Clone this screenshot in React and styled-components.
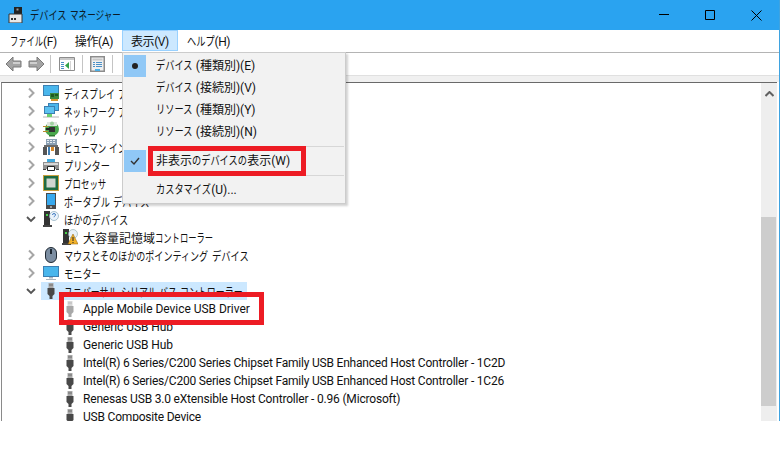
import React from "react";
import styled, { createGlobalStyle } from "styled-components";

const Global = createGlobalStyle`
  html, body { margin: 0; padding: 0; background: #fff; }
  body { font-family: Roboto, "Noto Sans CJK JP", sans-serif; font-size: 12px; color: #111; }
`;

const Page = styled.div`
  position: relative;
  width: 780px;
  height: 467px;
  overflow: hidden;
  background: #fff;
`;
const Win = styled.div`
  display: flex;
  flex-direction: column;
  height: 421px;
  border-right: 1px solid #3fa3e0;
  box-sizing: border-box;
`;
const TitleBar = styled.div`
  display: flex;
  align-items: center;
  height: 30px;
  flex: none;
  background: #2aa3f0;
  padding-left: 8px;
  color: #0a1a26;
`;
const TitleText = styled.span`
  margin: -1px 0 0 7px;
  flex: 1;
`;
const WinButton = styled.span`
  width: 46px;
  height: 30px;
  display: flex;
  align-items: center;
  justify-content: center;
`;
const MenuBar = styled.div`
  display: flex;
  height: 23px;
  flex: none;
  padding-left: 1px;
  box-sizing: border-box;
  border-bottom: 1px solid #b4b4b4;
  background: #fff;
`;
const MenuTop = styled.div`
  height: 21px;
  padding: 2px 9px 0;
  box-sizing: border-box;
  line-height: 20px;
  white-space: nowrap;
  letter-spacing: -0.4px;
  background: ${(p) => (p.$on ? "#cce8ff" : "transparent")};
  outline: ${(p) => (p.$on ? "1px solid #99d1ff" : "none")};
  outline-offset: -1px;
`;
const Toolbar = styled.div`
  display: flex;
  align-items: center;
  height: 22px;
  flex: none;
  padding-left: 5px;
  background: #fff;
`;
const ToolGap = styled.span`
  width: 6px;
`;
const ToolSep = styled.span`
  width: 1px;
  height: 18px;
  background: #c4c4c4;
  margin: 0 ${(p) => p.$r}px 0 ${(p) => p.$l}px;
`;
const Band = styled.div`
  height: 7px;
  flex: none;
  background: #f0f0f0;
  border-top: 1px solid #e0e0e0;
  box-sizing: border-box;
`;
const Body = styled.div`
  flex: 1;
  min-height: 0;
  display: flex;
  margin: 0 2px 0 1px;
  border-top: 1px solid #696969;
  border-left: 1px solid #8a8a8a;
`;
const TreePane = styled.div`
  flex: 1;
  min-width: 0;
  overflow: hidden;
  background: #fff;
  padding-top: 1px;
`;
const Row = styled.div`
  display: flex;
  align-items: center;
  height: 18px;
  padding-left: ${(p) => p.$indent}px;
  white-space: nowrap;
`;
const Twisty = styled.span`
  width: 12px;
  height: 18px;
  margin-right: 4px;
  display: flex;
  align-items: center;
  justify-content: center;
  flex: none;
`;
const RowBody = styled.span`
  display: flex;
  align-items: center;
  height: 18px;
  background: ${(p) => (p.$sel ? "#cce8ff" : "transparent")};
  padding-right: ${(p) => (p.$sel ? "4px" : "0")};
`;
const IconBox = styled.span`
  width: 16px;
  height: 16px;
  margin: 0 5px 0 2px;
  flex: none;
  display: flex;
`;
const Label = styled.span`
  letter-spacing: ${(p) => p.$track || 0}px;
`;
const Scrollbar = styled.div`
  width: 16px;
  flex: none;
  display: flex;
  flex-direction: column;
  background: #eeeeee;
`;
const ScrollArrow = styled.div`
  height: 21px;
  display: flex;
  align-items: center;
  justify-content: center;
`;
const ScrollGap = styled.div`
  height: 113px;
`;
const Thumb = styled.div`
  height: 189px;
  width: 15px;
  background: #cdcdcd;
`;
const DropMenu = styled.div`
  position: absolute;
  left: 122px;
  top: 52px;
  width: 224px;
  height: 152px;
  box-sizing: border-box;
  background: #f2f2f2;
  border: 1px solid #cccccc;
  box-shadow: 2px 2px 2px rgba(0, 0, 0, 0.18);
  padding: 2px 1px;
`;
const DropItem = styled.div`
  display: flex;
  align-items: center;
  height: 22px;
`;
const Gutter = styled.span`
  width: 22px;
  height: 22px;
  flex: none;
  display: flex;
  align-items: center;
  justify-content: center;
  background: ${(p) => (p.$on ? "#90c8f6" : "transparent")};
`;
const DropText = styled.span`
  margin: -3px 0 0 10px;
`;
const DropSep = styled.div`
  height: 1px;
  background: #d7d7d7;
  margin: 3px 0 3px 25px;
`;
const RedBox = styled.div`
  position: absolute;
  left: ${(p) => p.$x}px;
  top: ${(p) => p.$y}px;
  width: ${(p) => p.$w}px;
  height: ${(p) => p.$h}px;
  box-sizing: border-box;
  border: 5px solid #ed1c24;
`;
const Kana = styled.span`
  display: inline-block;
  white-space: nowrap;
  letter-spacing: 0;
  transform-origin: left center;
`;

/* Meiryo UI sets kana much narrower than a full em: squeeze each kana run to the width it takes there. */
const kanaStyle = (run, w) => {
  const small = (run.match(/[ァィゥェォッャュョぁぃぅぇぉっゃゅょ]/g) || []).length;
  const width = (run.length - small) * w + small * 5.5;
  return { width, transform: `scaleX(${width / (run.length * 12)})` };
};

const Jp = ({ children, w = 9.2 }) => (
  <>
    {children.split(/([ァ-ヶーぁ-ん]+)/).map((part, i) =>
      i % 2 ? (
        <Kana key={i} style={kanaStyle(part, w)}>
          {part}
        </Kana>
      ) : (
        part
      )
    )}
  </>
);

const Chevron = ({ open }) => (
  <svg width="10" height="12" viewBox="0 0 10 12">
    {open ? (
      <path d="M1 4l4 4 4-4" fill="none" stroke="#555" strokeWidth="1.8" />
    ) : (
      <path d="M3 1.5l4.5 4.5L3 10.5" fill="none" stroke="#a6a6a6" strokeWidth="2" />
    )}
  </svg>
);

const Usb = ({ light }) => (
  <svg width="16" height="16" viewBox="0 0 16 16">
    <path d="M5.5 0h5v5h-5z" fill={light ? "#d8d8d8" : "#a8a8a8"} />
    <path d="M6.5 1.5h1v1h-1zM8.5 1.5h1v1h-1z" fill={light ? "#999" : "#333"} />
    <path d="M4.5 5h7v6l-2 2v3h-3v-3l-2-2z" fill={light ? "#a8a8a8" : "#484848"} />
  </svg>
);
const AppIcon = () => (
  <svg width="15" height="16" viewBox="0 0 15 16">
    <path d="M6 0h8v8H6z" fill="#222" />
    <path d="M8.5 1.5h2v2h-2z" fill="#9a9a9a" />
    <path d="M1 7h13v9H1z" fill="#e8e8e8" stroke="#333" strokeWidth="1" />
    <path d="M3 11h2v2H3zM6 11h2v2H6z" fill="#333" />
  </svg>
);
const Monitor = () => (
  <svg width="16" height="16" viewBox="0 0 16 16">
    <path d="M0 1h16v11H0z" fill="#3c7fb1" />
    <path d="M1 2h14v9H1z" fill="#49b6ec" />
    <path d="M6 12h4v1.5H6zM3 14h10v1H3z" fill="#a9b4bd" />
  </svg>
);
const DisplayIcon = () => (
  <svg width="16" height="16" viewBox="0 0 16 16">
    <path d="M0 0h16v11H0z" fill="#3c7fb1" />
    <path d="M1 1h14v9H1z" fill="#49b6ec" />
    <path d="M7 8h9v6H7z" fill="#3b8a3e" />
    <path d="M8 9h3v3H8zM12 9h3v2h-3z" fill="#1e5a22" />
    <path d="M8 14h7v2H8z" fill="#d6982e" />
  </svg>
);
const NetworkIcon = () => (
  <svg width="16" height="16" viewBox="0 0 16 16">
    <path d="M5 0h11v8H5z" fill="#3c7fb1" />
    <path d="M6 1h9v6H6z" fill="#49b6ec" />
    <path d="M1 3h11v8H1z" fill="#3c7fb1" />
    <path d="M2 4h9v6H2z" fill="#5cc1f0" />
    <path d="M0 13h16v2H0z" fill="#d9d9d9" />
    <path d="M4 11h5v3H4z" fill="#6fd06f" />
  </svg>
);
const BatteryIcon = () => (
  <svg width="16" height="16" viewBox="0 0 16 16">
    <circle cx="9" cy="8" r="7" fill="#49a84c" />
    <path d="M4 1h10v4H4z" fill="#dfe6df" />
    <circle cx="9" cy="2.5" r="2" fill="#9fd0a0" />
    <path d="M6 6h6v5H6z" fill="#333" />
    <path d="M0 5h5v1H0zM0 10h5v1H0z" fill="#b88a2e" />
    <path d="M3 7h4v2H3z" fill="#222" />
    <path d="M6 14h6v1.5H6z" fill="#2c7a2f" />
  </svg>
);
const HidIcon = () => (
  <svg width="16" height="16" viewBox="0 0 16 16">
    <path d="M3 0h11v7H3z" fill="#8aa0b4" />
    <path d="M4 1h2v1H4zM7 1h2v1H7zM10 1h2v1h-2zM4 3h2v1H4zM7 3h2v1H7zM10 3h2v1h-2z" fill="#e8eef3" />
    <path d="M1 6h14v2H1z" fill="#6b6b6b" />
    <path d="M0 8h4v8H0zM12 8h4v8h-4z" fill="#555" />
    <path d="M5 8h2v8H5z" fill="#3f7fb5" />
    <path d="M8 8h3v4H8z" fill="#d58a2c" />
  </svg>
);
const PrinterIcon = () => (
  <svg width="16" height="16" viewBox="0 0 16 16">
    <path d="M4 2h8v4H4z" fill="#3fa9dd" />
    <path d="M0 5h16v7H0z" fill="#8f8f8f" />
    <path d="M1 6h14v2H1z" fill="#d8d8d8" />
    <path d="M4.5 9.5h7v4h-7z" fill="#fff" stroke="#222" />
    <path d="M0 12h3v1H0zM13 12h3v1h-3z" fill="#444" />
  </svg>
);
const CpuIcon = () => (
  <svg width="16" height="16" viewBox="0 0 16 16">
    <path d="M0 0h16v16H0z" fill="#c9a13e" />
    <path d="M1 1h14v14H1z" fill="#1e6b42" />
    <path d="M3.5 3.5h9v9h-9z" fill="#cfd6d0" />
  </svg>
);
const PortableIcon = () => (
  <svg width="16" height="16" viewBox="0 0 16 16">
    <path d="M3 0h10v16H3z" fill="#4a4a4a" />
    <path d="M4 1h8v11H4z" fill="#38a9ee" />
    <path d="M7 13h2v2H7z" fill="#a0a0a0" />
  </svg>
);
const OtherIcon = ({ warn }) => (
  <svg width="16" height="16" viewBox="0 0 16 16">
    <path d="M1 0h6v15H1z" fill="#333" />
    <path d="M0 14h9v2H0z" fill="#444" />
    <path d="M3 3h2v2H3z" fill="#47d04a" />
    {warn ? (
      <>
        <circle cx="11" cy="5" r="4.5" fill="#e8f1f8" stroke="#8aa" strokeWidth=".6" />
        <path d="M11 5l5 10H6z" fill="#f3b32b" stroke="#8a5a00" strokeWidth=".5" />
        <path d="M10.5 8h1v4h-1zM10.5 13h1v1h-1z" fill="#222" />
      </>
    ) : (
      <>
        <circle cx="11" cy="5" r="4.5" fill="#eaf3fb" stroke="#8ab" strokeWidth=".7" />
        <path d="M9.5 4a1.5 1.5 0 113 0c0 1-1.5 1-1.5 2.2" fill="none" stroke="#3a78c0" strokeWidth="1" />
      </>
    )}
  </svg>
);
const MouseIcon = () => (
  <svg width="16" height="16" viewBox="0 0 16 16">
    <rect x="2.5" y="0.5" width="11" height="15" rx="5.5" fill="#7c8ea2" stroke="#1f2933" />
    <path d="M8 2v5" stroke="#1f2933" strokeWidth="2" />
  </svg>
);

const BackIcon = ({ flip }) => (
  <svg width="17" height="16" viewBox="0 0 17 16" style={flip ? { transform: "scaleX(-1)" } : undefined}>
    <path d="M1 8l7-7v4h8v6H8v4z" fill="#a4a4a4" stroke="#7a7a7a" />
    <path d="M8 6h7v2H8z" fill="#cfcfcf" />
  </svg>
);
const PaneIcon = () => (
  <svg width="16" height="14" viewBox="0 0 16 14">
    <path d="M.5.5h15v13H.5z" fill="#fff" stroke="#8c8c8c" />
    <path d="M1 1h14v2H1z" fill="#c9c9c9" />
    <path d="M2 5h3v1H2zM2 7h3v1H2zM2 9h3v1H2zM2 11h3v1H2z" fill="#4a90c8" />
    <path d="M10 5v7L6 8.5z" fill="#33a34a" />
    <path d="M11 4h1v9h-1z" fill="#d5d5d5" />
  </svg>
);
const PropsIcon = () => (
  <svg width="15" height="16" viewBox="0 0 15 16">
    <path d="M.75.75h13.5v14.5H.75z" fill="#f0f0f0" stroke="#8c8c8c" strokeWidth="1.5" />
    <path d="M2.5 2.5h10v2h-10z" fill="#c8c8c8" />
    <path d="M3 6h2v1H3zM6 6h6v1H6zM3 8h2v1H3zM6 8h6v1H6zM3 10h2v1H3zM6 10h6v1H6z" fill="#4a90c8" />
    <path d="M5 13h5v2H5z" fill="#4ab0e8" />
  </svg>
);

const rows = [
  { icon: <DisplayIcon />, text: "ディスプレイ アダプター" },
  { icon: <NetworkIcon />, text: "ネットワーク アダプター" },
  { icon: <BatteryIcon />, text: "バッテリ" },
  { icon: <HidIcon />, text: "ヒューマン インターフェイス デバイス" },
  { icon: <PrinterIcon />, text: "プリンター" },
  { icon: <CpuIcon />, text: "プロセッサ" },
  { icon: <PortableIcon />, text: "ポータブル デバイス" },
  { icon: <OtherIcon />, text: "ほかのデバイス", open: true },
  { icon: <OtherIcon warn />, text: "大容量記憶域コントローラー", child: true, w: 8.3 },
  { icon: <MouseIcon />, text: "マウスとそのほかのポインティング デバイス", w: 9.3 },
  { icon: <Monitor />, text: "モニター" },
  { icon: <Usb />, text: "ユニバーサル シリアル バス コントローラー", open: true, sel: true, w: 8.95 },
  { icon: <Usb light />, text: "Apple Mobile Device USB Driver", child: true, track: -0.03 },
  { icon: <Usb />, text: "Generic USB Hub", child: true, track: -0.07 },
  { icon: <Usb />, text: "Generic USB Hub", child: true, track: -0.07 },
  { icon: <Usb />, text: "Intel(R) 6 Series/C200 Series Chipset Family USB Enhanced Host Controller - 1C2D", child: true, track: -0.2 },
  { icon: <Usb />, text: "Intel(R) 6 Series/C200 Series Chipset Family USB Enhanced Host Controller - 1C26", child: true, track: -0.2 },
  { icon: <Usb />, text: "Renesas USB 3.0 eXtensible Host Controller - 0.96 (Microsoft)", child: true, track: -0.19 },
  { icon: <Usb />, text: "USB Composite Device", child: true, track: -0.2 },
];

export default function App() {
  return (
    <Page>
      <Global />
      <Win>
        <TitleBar>
          <AppIcon />
          <TitleText><Jp>デバイス マネージャー</Jp></TitleText>
          <WinButton>
            <svg width="10" height="10" viewBox="0 0 10 10"><path d="M0 4.5h10" stroke="#000" /></svg>
          </WinButton>
          <WinButton>
            <svg width="10" height="10" viewBox="0 0 10 10"><path d="M.5.5h9v9h-9z" fill="none" stroke="#000" /></svg>
          </WinButton>
          <WinButton>
            <svg width="11" height="11" viewBox="0 0 11 11"><path d="M.5.5l10 10M10.5.5l-10 10" stroke="#000" /></svg>
          </WinButton>
        </TitleBar>
        <MenuBar>
          <MenuTop><Jp>ファイル(F)</Jp></MenuTop>
          <MenuTop>操作(A)</MenuTop>
          <MenuTop $on>表示(V)</MenuTop>
          <MenuTop><Jp>ヘルプ(H)</Jp></MenuTop>
        </MenuBar>
        <Toolbar>
          <BackIcon />
          <ToolGap />
          <BackIcon flip />
          <ToolSep $l={5} $r={8} />
          <PaneIcon />
          <ToolSep $l={7} $r={7} />
          <PropsIcon />
          <ToolSep $l={7} $r={7} />
        </Toolbar>
        <Band />
        <Body>
          <TreePane>
            {rows.map((r, i) => (
              <Row key={i} $indent={r.child ? 58 : 23}>
                {!r.child && (
                  <Twisty>
                    <Chevron open={r.open} />
                  </Twisty>
                )}
                <RowBody $sel={r.sel}>
                  <IconBox>{r.icon}</IconBox>
                  <Label $track={r.track}><Jp w={r.w}>{r.text}</Jp></Label>
                </RowBody>
              </Row>
            ))}
          </TreePane>
          <Scrollbar>
            <ScrollArrow>
              <svg width="9" height="6" viewBox="0 0 9 6"><path d="M.5 5L4.5 1l4 4" fill="none" stroke="#606060" strokeWidth="2" /></svg>
            </ScrollArrow>
            <ScrollGap />
            <Thumb />
          </Scrollbar>
        </Body>
      </Win>
      <DropMenu>
        <DropItem>
          <Gutter $on><svg width="8" height="8"><circle cx="4" cy="4" r="3" fill="#222" /></svg></Gutter>
          <DropText><Jp>デバイス (種類別)(E)</Jp></DropText>
        </DropItem>
        <DropItem><Gutter /><DropText><Jp>デバイス (接続別)(V)</Jp></DropText></DropItem>
        <DropItem><Gutter /><DropText><Jp>リソース (種類別)(Y)</Jp></DropText></DropItem>
        <DropItem><Gutter /><DropText><Jp>リソース (接続別)(N)</Jp></DropText></DropItem>
        <DropSep />
        <DropItem>
          <Gutter $on><svg width="10" height="8" viewBox="0 0 10 8"><path d="M1 4l3 3 5-6" fill="none" stroke="#333" strokeWidth="1.4" /></svg></Gutter>
          <DropText><Jp>非表示のデバイスの表示(W)</Jp></DropText>
        </DropItem>
        <DropSep />
        <DropItem><Gutter /><DropText><Jp>カスタマイズ(U)...</Jp></DropText></DropItem>
      </DropMenu>
      <RedBox $x={148} $y={146} $w={158} $h={30} />
      <RedBox $x={59} $y={292} $w={205} $h={33} />
    </Page>
  );
}
